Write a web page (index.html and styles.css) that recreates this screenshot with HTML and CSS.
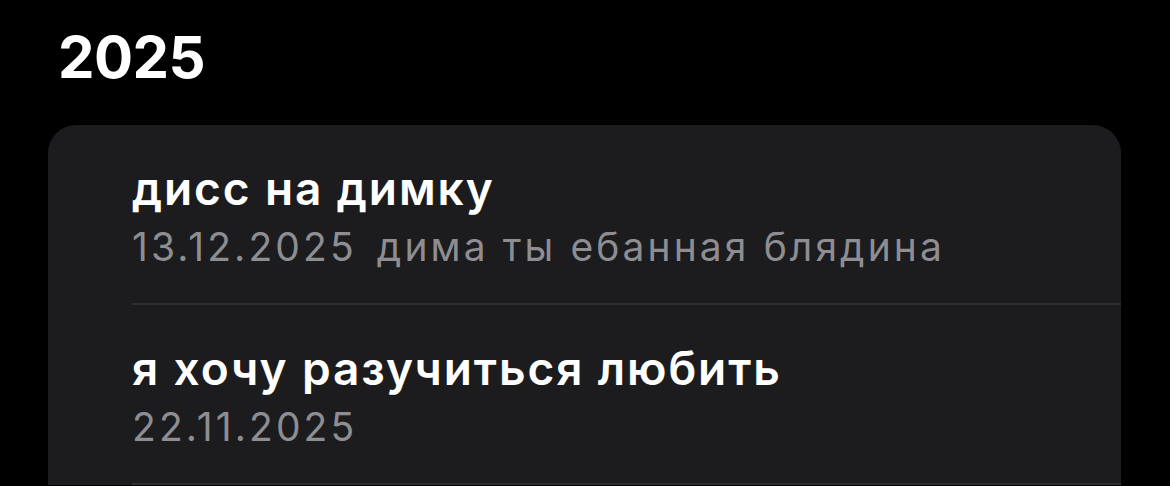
FILE: index.html
```html
<!DOCTYPE html>
<html lang="ru">
<head>
  <meta charset="UTF-8" />
  <meta name="viewport" content="width=device-width, initial-scale=1.0" />
  <title>Заметки</title>
  <link rel="stylesheet" href="styles.css">
</head>
<body>
  <section class="year">
    <h2 class="year-title">2025</h2>

    <ul class="notes">
      <li class="note">
        <div class="note-title">дисс на димку</div>
        <div class="note-meta">
          <span class="note-date">13.12.2025</span>
          <span class="note-preview">дима ты ебанная блядина</span>
        </div>
      </li>
      <li class="note">
        <div class="note-title">я хочу разучиться любить</div>
        <div class="note-meta">
          <span class="note-date">22.11.2025</span>
        </div>
      </li>
    </ul>
  </section>
</body>
</html>
```

FILE: styles.css
```css
body {
  margin: 0;
  background: #000;
  color: #fff;
  font-family: Inter, 'Noto Sans', sans-serif;
  height: 100vh;
  overflow: hidden;
}

.year {
  padding: 0 49px 0 48px;
}

.year-title {
  margin: 0;
  padding: 22px 0 0 10px;
  font-size: 58px;
  font-weight: 700;
  line-height: 70px;
  letter-spacing: -0.6px;
}

.notes {
  list-style: none;
  margin: 33px 0 0;
  padding: 0;
  background: #1c1c1e;
  border-radius: 28px 28px 0 0;
}

.note {
  margin-left: 84px;
  padding: 34px 0 26px;
  border-bottom: 2px solid #2e2e30;
}

.note-title {
  font-size: 46px;
  font-weight: 600;
  line-height: 58px;
  letter-spacing: 1.9px;
}

.note-meta {
  font-size: 39px;
  line-height: 60px;
  letter-spacing: 3.1px;
  color: #8d8d92;
}

.note-date {
  margin-right: 6px;
}
```
